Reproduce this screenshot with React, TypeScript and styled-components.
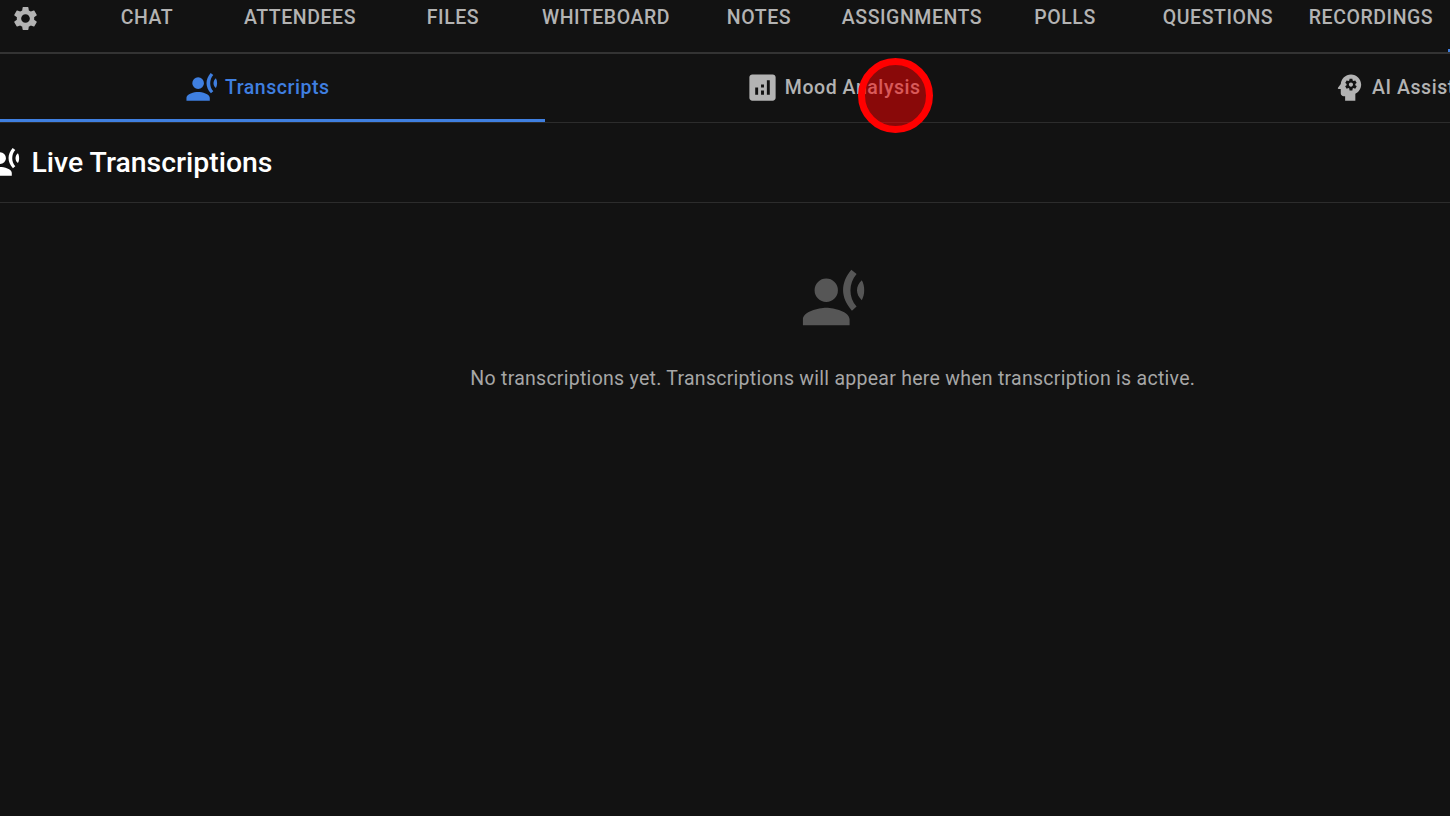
import React from "react";
import styled, { createGlobalStyle } from "styled-components";

const GlobalStyle = createGlobalStyle`
  html, body {
    margin: 0;
    height: 100%;
    background: #121212;
    overflow: hidden;
  }
  #root {
    height: 100%;
  }
`;

const paths = {
  voice:
    "M9 15c-2.67 0-8 1.34-8 4v2h16v-2c0-2.66-5.33-4-8-4M9 5a4 4 0 1 0 0 8 4 4 0 0 0 0-8M17.6 2 19.4 3.4C16.6 6.6 16.6 11.4 19.4 14.6L17.8 16C13.8 11.5 13.8 6.5 17.6 2zM21.2 5.6C19 7.5 19 10.5 21.2 12.4 22.3 10.5 22.3 7.5 21.2 5.6z",
  settings:
    "M19.14 12.94c.04-.3.06-.61.06-.94 0-.32-.02-.64-.07-.94l2.03-1.58c.18-.14.23-.41.12-.61l-1.92-3.32c-.12-.22-.37-.29-.59-.22l-2.39.96c-.5-.38-1.03-.7-1.62-.94l-.36-2.54c-.04-.24-.24-.41-.48-.41h-3.84c-.24 0-.43.17-.47.41l-.36 2.54c-.59.24-1.13.57-1.62.94l-2.39-.96c-.22-.08-.47 0-.59.22L2.74 8.87c-.12.21-.08.47.12.61l2.03 1.58c-.05.3-.09.63-.09.94s.02.64.07.94l-2.03 1.58c-.18.14-.23.41-.12.61l1.92 3.32c.12.22.37.29.59.22l2.39-.96c.5.38 1.03.7 1.62.94l.36 2.54c.05.24.24.41.48.41h3.84c.24 0 .44-.17.47-.41l.36-2.54c.59-.24 1.13-.56 1.62-.94l2.39.96c.22.08.47 0 .59-.22l1.92-3.32c.12-.22.07-.47-.12-.61l-2.01-1.58zM12 15.6c-1.98 0-3.6-1.62-3.6-3.6s1.62-3.6 3.6-3.6 3.6 1.62 3.6 3.6-1.62 3.6-3.6 3.6z",
  analytics:
    "M19 3H5c-1.1 0-2 .9-2 2v14c0 1.1.9 2 2 2h14c1.1 0 2-.9 2-2V5c0-1.1-.9-2-2-2zM9 17H7v-5h2v5zm4 0h-2v-3h2v3zm0-5h-2v-2h2v2zm4 5h-2V7h2v10z",
  psychology:
    "M13 8.57c-.79 0-1.43.64-1.43 1.43s.64 1.43 1.43 1.43 1.43-.64 1.43-1.43-.64-1.43-1.43-1.43M13 3C9.25 3 6.2 5.94 6.02 9.64L4.1 12.2c-.25.33-.01.8.4.8H6v3c0 1.1.9 2 2 2h1v3h7v-4.68c2.36-1.12 4-3.53 4-6.32 0-3.87-3.13-7-7-7m3 7c0 .13-.01.26-.02.39l.83.66c.08.06.1.16.05.25l-.8 1.39c-.05.09-.16.12-.24.09l-.99-.4c-.21.16-.43.29-.67.39L14 13.83c-.01.1-.1.17-.2.17h-1.6c-.1 0-.18-.07-.2-.17l-.15-1.06c-.25-.1-.47-.23-.68-.39l-.99.4c-.09.03-.2 0-.25-.09l-.8-1.39c-.05-.08-.03-.19.05-.25l.84-.66c-.01-.13-.02-.26-.02-.39s.02-.27.04-.4l-.85-.66c-.08-.06-.1-.16-.05-.26l.8-1.38c.05-.09.15-.12.24-.09l1 .4c.2-.15.43-.29.67-.39l.15-1.06c.02-.1.1-.17.2-.17h1.6c.1 0 .18.07.2.17l.15 1.06c.24.1.46.23.67.39l1-.4c.09-.03.2 0 .24.09l.8 1.38c.05.09.03.2-.05.26l-.85.66c.03.13.04.26.04.39",
};

const navItems = [
  "Chat",
  "Attendees",
  "Files",
  "Whiteboard",
  "Notes",
  "Assignments",
  "Polls",
  "Questions",
  "Recordings",
];

const Icon: React.FC<{ name: keyof typeof paths; size: number; color: string }> = ({
  name,
  size,
  color,
}) => (
  <svg width={size} height={size} viewBox="0 0 24 24" fill={color} style={{ flexShrink: 0 }}>
    <path d={paths[name]} />
  </svg>
);

export default function App() {
  return (
    <Page>
      <GlobalStyle />
      <TopNav>
        <GearCell>
          <Icon name="settings" size={29} color="#b3b3b3" />
        </GearCell>
        {navItems.map((item) => (
          <NavTab key={item}>{item}</NavTab>
        ))}
        <NavIndicator />
      </TopNav>

      <Panel>
        <SubTabs>
          <SubTab $active>
            <Icon name="voice" size={35} color="#3f7fe0" />
            Transcripts
          </SubTab>
          <SubTab>
            <Icon name="analytics" size={35} color="#b3b3b3" />
            Mood Analysis
          </SubTab>
          <SubTab>
            <Icon name="psychology" size={35} color="#b3b3b3" />
            AI Assistant
          </SubTab>
        </SubTabs>

        <Heading>
          <Icon name="voice" size={35} color="#ffffff" />
          <HeadingText>Live Transcriptions</HeadingText>
        </Heading>

        <EmptyState>
          <EmptyIcon>
            <Icon name="voice" size={70} color="#565656" />
          </EmptyIcon>
          <EmptyText>
            No transcriptions yet. Transcriptions will appear here when transcription is active.
          </EmptyText>
        </EmptyState>
      </Panel>

      <ClickMarker />
    </Page>
  );
}

const Page = styled.div`
  position: relative;
  width: 1450px;
  height: 816px;
  overflow: hidden;
  background: #121212;
  font-family: Roboto, "Liberation Sans", sans-serif;
`;

const TopNav = styled.nav`
  display: flex;
  height: 52px;
  border-bottom: 2px solid #333333;
`;

const GearCell = styled.div`
  flex: 0 0 70.5px;
  display: flex;
  align-items: flex-start;
  justify-content: flex-start;
  padding: 3.5px 0 0 11px;
  box-sizing: border-box;
`;

const NavTab = styled.div`
  flex: 0 0 153px;
  height: 34px;
  display: flex;
  align-items: center;
  justify-content: center;
  color: #b3b3b3;
  font-size: 19.5px;
  font-weight: 500;
  letter-spacing: 0.55px;
  text-transform: uppercase;
`;

const NavIndicator = styled.div`
  flex: 0 0 153px;
  height: 3px;
  margin-top: 49px;
  background: #3f7fe0;
`;

const Panel = styled.div`
  width: 1726.5px;
  margin-left: -30.5px;
`;

const SubTabs = styled.div`
  display: flex;
  box-sizing: border-box;
  height: 69px;
  border-bottom: 1px solid #2c2c2c;
`;

const SubTab = styled.div<{ $active?: boolean }>`
  flex: 0 0 575.5px;
  box-sizing: border-box;
  display: flex;
  align-items: center;
  justify-content: center;
  gap: 5px;
  padding-top: 1px;
  color: ${(p) => (p.$active ? "#3f7fe0" : "#b3b3b3")};
  font-size: 19.5px;
  font-weight: 500;
  letter-spacing: 0.55px;
  border-bottom: 3px solid ${(p) => (p.$active ? "#3f7fe0" : "transparent")};
`;

const Heading = styled.div`
  display: flex;
  align-items: center;
  box-sizing: border-box;
  gap: 10px;
  height: 80px;
  padding-left: 17px;
  border-bottom: 1px solid #2c2c2c;
  color: #ffffff;
`;

const HeadingText = styled.span`
  font-size: 28.4px;
  font-weight: 500;
`;

const EmptyState = styled.div`
  display: flex;
  flex-direction: column;
  align-items: center;
  padding-top: 61px;
`;

const EmptyIcon = styled.div`
  display: flex;
  padding-left: 4px;
`;

const EmptyText = styled.p`
  margin: 33px 0 0;
  color: #a6a6a6;
  font-size: 19.5px;
  letter-spacing: 0.27px;
`;

const ClickMarker = styled.div`
  position: absolute;
  left: 858px;
  top: 58px;
  width: 75px;
  height: 75px;
  box-sizing: border-box;
  border: 7px solid #ff0000;
  border-radius: 50%;
  background: rgba(255, 0, 0, 0.5);
`;
